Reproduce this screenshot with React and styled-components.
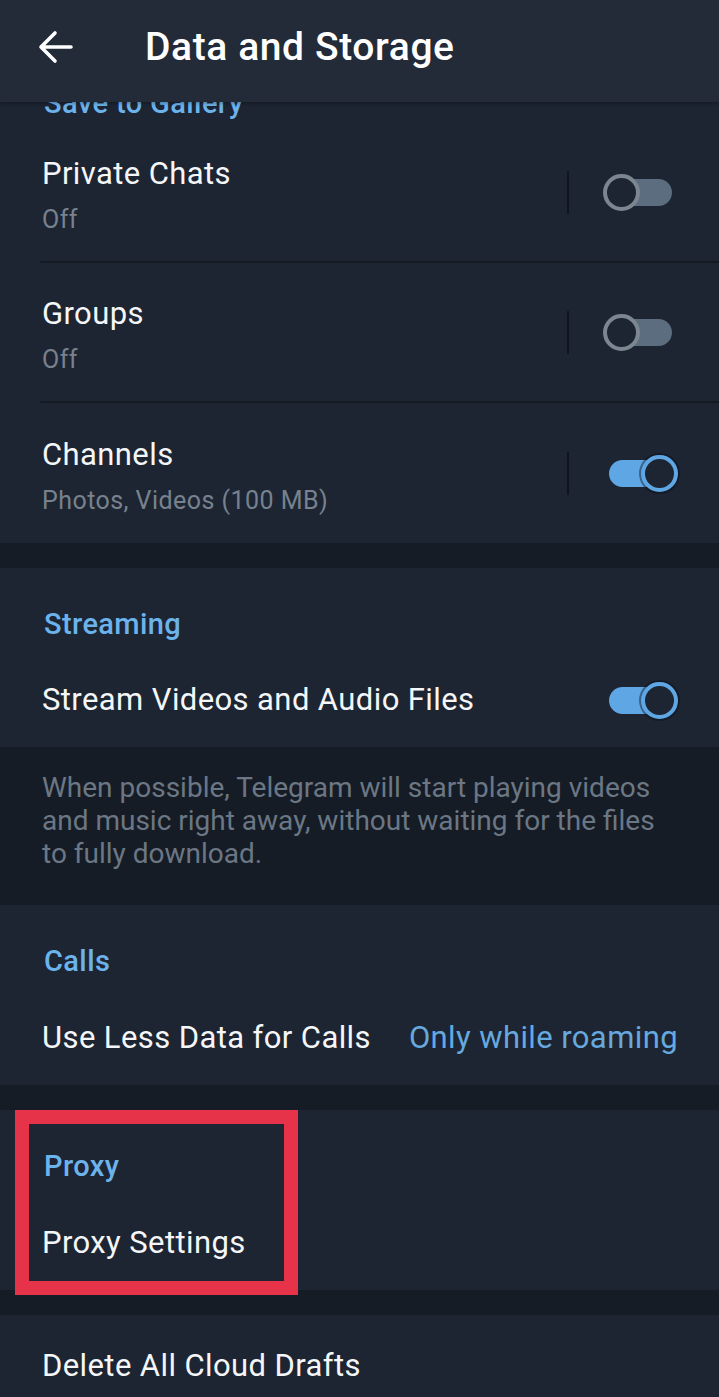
import React from "react";
import styled, { createGlobalStyle } from "styled-components";

const Global = createGlobalStyle`
  html, body { margin: 0; padding: 0; background: #161c25; }
  body { font-family: Roboto, "Noto Sans", "Liberation Sans", sans-serif; -webkit-font-smoothing: antialiased; }
  * { box-sizing: border-box; }
`;

const Screen = styled.div`
  width: 719px;
  height: 1397px;
  overflow: hidden;
  background: #161c25;
  display: flex;
  flex-direction: column;
`;

const TopBar = styled.header`
  flex: none;
  height: 102px;
  padding-bottom: 8px;
  background: #232b38;
  display: flex;
  align-items: center;
  position: relative;
  z-index: 2;
  box-shadow: 0 1px 4px rgba(0, 0, 0, 0.35);
`;

const BackButton = styled.div`
  width: 145px;
  display: flex;
  align-items: center;
  padding-left: 38px;
`;

const Title = styled.h1`
  margin: 0;
  font-size: 39px;
  line-height: 46px;
  letter-spacing: 0.6px;
  font-weight: 500;
  color: #ffffff;
`;

const Section = styled.section`
  flex: none;
  background: #1d2533;
  position: relative;
  margin-top: ${(p) => (p.$gap ? "25px" : "0")};
`;

const SectionHeader = styled.div`
  height: ${(p) => (p.$clipped ? "21px" : "85px")};
  overflow: hidden;
  display: flex;
  align-items: ${(p) => (p.$clipped ? "flex-end" : "flex-start")};
  padding: ${(p) => (p.$clipped ? "0 0 4px 44px" : "40px 0 0 44px")};
  font-size: 29px;
  line-height: 32px;
  letter-spacing: 0.4px;
  font-weight: 500;
  color: #6cb3ec;
`;

const Row = styled.div`
  display: flex;
  padding-left: 40px;
`;

const RowBody = styled.div`
  flex: 1;
  display: flex;
  align-items: center;
  height: ${(p) => p.$height || 95}px;
  padding: 0 41px 0 2px;
  border-bottom: ${(p) => (p.$divider ? "2px solid #141a22" : "0")};
`;

const Texts = styled.div`
  flex: 1;
  display: flex;
  flex-direction: column;
  gap: 13px;
  padding-top: ${(p) => (p.$twoLine ? "6px" : "0")};
`;

const Label = styled.div`
  font-size: 31px;
  line-height: 36px;
  letter-spacing: 0.4px;
  color: #f4f6f8;
  white-space: nowrap;
`;

const SubLabel = styled.div`
  font-size: 25px;
  line-height: 30px;
  letter-spacing: 0.45px;
  color: #77828e;
  white-space: nowrap;
`;

const Value = styled.div`
  font-size: 31px;
  line-height: 36px;
  letter-spacing: 0.4px;
  color: #65a9df;
  white-space: nowrap;
`;

const VDivider = styled.div`
  width: 2px;
  height: 43px;
  background: #10151d;
  margin-right: 34px;
`;

const Switch = styled.div`
  position: relative;
  width: 75px;
  height: 39px;
  flex: none;
`;

const Track = styled.div`
  position: absolute;
  left: 6px;
  right: 6px;
  top: 6px;
  height: 27px;
  border-radius: 14px;
  background: ${(p) => (p.$on ? "#5ea6e4" : "#5b6d7e")};
`;

const Knob = styled.div`
  position: absolute;
  top: 1px;
  ${(p) => (p.$on ? "right: 0;" : "left: 0;")}
  width: 37px;
  height: 37px;
  border-radius: 50%;
  background: #1d2533;
  border: 4px solid ${(p) => (p.$on ? "#5ea6e4" : "#7b8691")};
  box-shadow: ${(p) => (p.$on ? "0 0 0 2px rgba(10, 16, 26, 0.45)" : "none")};
`;

const Info = styled.div`
  flex: none;
  padding: 24px 20px 35px 42px;
  font-size: 28px;
  line-height: 33px;
  color: #6b7784;
  white-space: nowrap;
`;

const Highlight = styled.div`
  position: absolute;
  left: 15px;
  top: 0;
  width: 283px;
  height: 185px;
  border: 14px solid #e6334a;
  pointer-events: none;
`;

const Toggle = ({ on }) => (
  <Switch>
    <Track $on={on} />
    <Knob $on={on} />
  </Switch>
);

const BackArrow = () => (
  <svg width="36" height="34" viewBox="0 0 36 34" fill="none">
    <path
      d="M3 17 H33 M3 17 L17 3 M3 17 L17 31"
      stroke="#ffffff"
      strokeWidth="3.6"
      strokeLinecap="round"
      strokeLinejoin="round"
    />
  </svg>
);

const galleryRows = [
  { title: "Private Chats", sub: "Off", on: false, divider: true },
  { title: "Groups", sub: "Off", on: false, divider: true },
  { title: "Channels", sub: "Photos, Videos (100 MB)", on: true, divider: false },
];

export default function App() {
  return (
    <>
      <Global />
      <Screen>
        <TopBar>
          <BackButton>
            <BackArrow />
          </BackButton>
          <Title>Data and Storage</Title>
        </TopBar>

        <Section>
          <SectionHeader $clipped>Save to Gallery</SectionHeader>
          {galleryRows.map((r) => (
            <Row key={r.title}>
              <RowBody $height={140} $divider={r.divider}>
                <Texts $twoLine>
                  <Label>{r.title}</Label>
                  <SubLabel>{r.sub}</SubLabel>
                </Texts>
                <VDivider />
                <Toggle on={r.on} />
              </RowBody>
            </Row>
          ))}
        </Section>

        <Section $gap>
          <SectionHeader>Streaming</SectionHeader>
          <Row>
            <RowBody $height={94}>
              <Texts>
                <Label>Stream Videos and Audio Files</Label>
              </Texts>
              <Toggle on />
            </RowBody>
          </Row>
        </Section>

        <Info>
          When possible, Telegram will start playing videos
          <br />
          and music right away, without waiting for the files
          <br />
          to fully download.
        </Info>

        <Section>
          <SectionHeader>Calls</SectionHeader>
          <Row>
            <RowBody $height={95}>
              <Texts>
                <Label>Use Less Data for Calls</Label>
              </Texts>
              <Value>Only while roaming</Value>
            </RowBody>
          </Row>
        </Section>

        <Section $gap>
          <SectionHeader>Proxy</SectionHeader>
          <Row>
            <RowBody $height={95}>
              <Texts>
                <Label>Proxy Settings</Label>
              </Texts>
            </RowBody>
          </Row>
          <Highlight />
        </Section>

        <Section $gap>
          <Row>
            <RowBody $height={102}>
              <Texts>
                <Label>Delete All Cloud Drafts</Label>
              </Texts>
            </RowBody>
          </Row>
        </Section>
      </Screen>
    </>
  );
}
